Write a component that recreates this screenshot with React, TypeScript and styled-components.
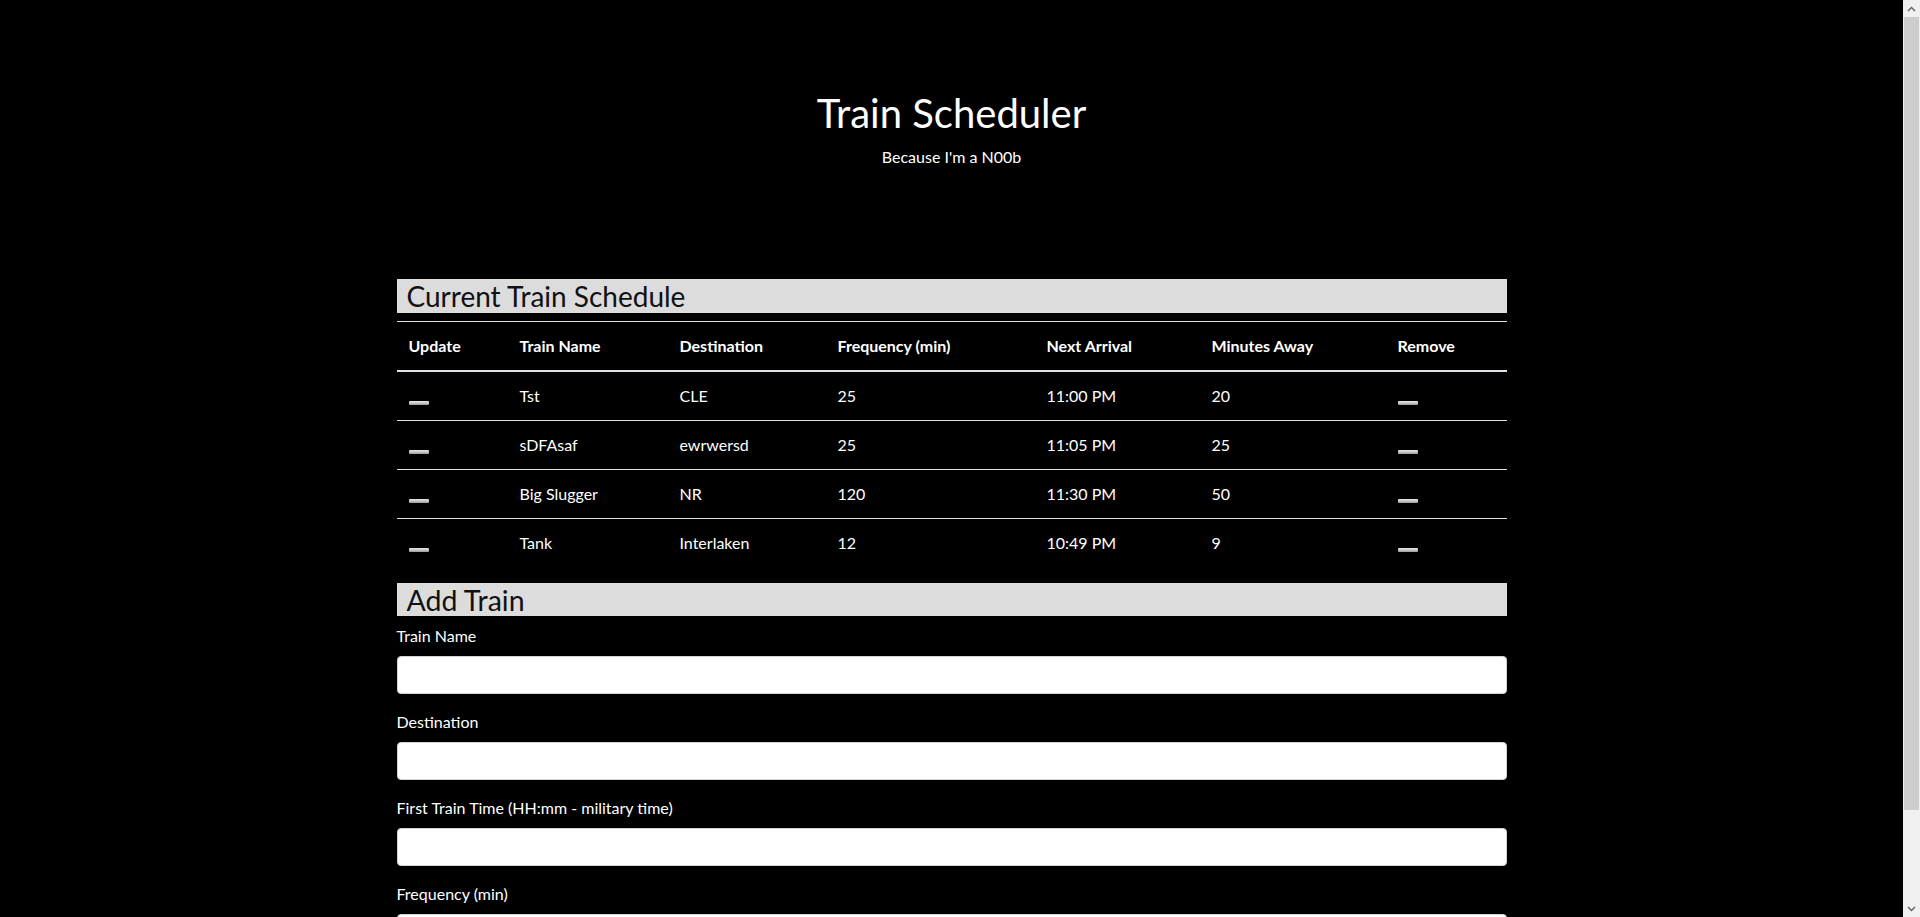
import React from "react";
import styled, { createGlobalStyle } from "styled-components";

const GlobalStyle = createGlobalStyle`
  html, body {
    margin: 0;
    padding: 0;
    background: #000;
    overflow: hidden;
  }
  body {
    font-family: "Lato", "Open Sans", sans-serif;
    font-size: 16px;
    line-height: 1.5;
    color: #fff;
  }
  * { box-sizing: border-box; }
`;

const Window = styled.div`
  display: flex;
  height: 100vh;
  background: #000;
`;

const Main = styled.main`
  flex: 1;
  min-width: 0;
  height: 100%;
  overflow: hidden;
`;

const ScrollRail = styled.div`
  width: 17px;
  flex: 0 0 17px;
  display: flex;
  flex-direction: column;
  background: #f0f0f0;
`;

const RailArrow = styled.div`
  height: 17px;
  flex: 0 0 17px;
  display: flex;
  align-items: center;
  justify-content: center;
  color: #606060;
`;

const RailThumb = styled.div`
  flex: 0 0 793px;
  margin: 0 1px 0 1px;
  background: #cdcdcd;
`;

const RailTrack = styled.div`
  flex: 1;
`;

const Container = styled.div`
  max-width: 1140px;
  margin: 0 auto;
  padding: 0 15px 16px;
`;

const Hero = styled.header`
  text-align: center;
  padding: 89px 0 62px;
  margin-bottom: 32px;
`;

const Title = styled.h1`
  margin: 0 0 8px;
  font-size: 40px;
  line-height: 48px;
  font-weight: 400;
`;

const Subtitle = styled.p`
  margin: 0 0 16px;
  font-size: 16px;
  line-height: 24px;
`;

const SectionBar = styled.h3<{ $size?: number }>`
  margin: 0 0 8px;
  padding-left: 10px;
  background: #dcdcdc;
  color: #111;
  font-size: ${(p) => p.$size ?? 28}px;
  line-height: 34px;
  font-weight: 400;
  height: ${(p) => (p.$size ? 33 : 34)}px;
`;

const Table = styled.table`
  width: 100%;
  border-collapse: collapse;
  table-layout: fixed;
  margin-bottom: 16px;
  color: #fff;
`;

const Col = styled.col<{ $w: number }>`
  width: ${(p) => p.$w}px;
`;

const Th = styled.th`
  text-align: left;
  font-weight: 700;
  padding: 12px;
  line-height: 24px;
  border-top: 1px solid #dee2e6;
  border-bottom: 2px solid #dee2e6;
`;

const Td = styled.td`
  padding: 12px;
  line-height: 24px;
  border-top: 1px solid #dee2e6;
`;

const BodyRow = styled.tr`
  &:first-child td {
    border-top: none;
  }
`;

const MiniButton = styled.button`
  display: inline-block;
  width: 20px;
  height: 4px;
  padding: 0;
  margin: 0;
  border: none;
  border-radius: 1px;
  background: linear-gradient(#e6e6e6, #c8c8c8 50%, #9a9a9a);
  vertical-align: -3px;
  cursor: pointer;
`;

const FormGroup = styled.div`
  margin-bottom: 16px;
`;

const Label = styled.label`
  display: inline-block;
  margin-bottom: 8px;
  line-height: 24px;
  color: #fff;
`;

const Input = styled.input`
  display: block;
  width: 100%;
  height: 38px;
  padding: 6px 12px;
  font-size: 16px;
  font-family: inherit;
  border: 1px solid #ced4da;
  border-radius: 4px;
  background: #fff;
  color: #495057;
`;

const SubmitButton = styled.button`
  height: 38px;
  padding: 6px 12px;
  font-size: 16px;
  font-family: inherit;
  border: 1px solid #6c757d;
  border-radius: 4px;
  background: #6c757d;
  color: #fff;
`;

const trains = [
  { name: "Tst", dest: "CLE", freq: "25", next: "11:00 PM", away: "20" },
  { name: "sDFAsaf", dest: "ewrwersd", freq: "25", next: "11:05 PM", away: "25" },
  { name: "Big Slugger", dest: "NR", freq: "120", next: "11:30 PM", away: "50" },
  { name: "Tank", dest: "Interlaken", freq: "12", next: "10:49 PM", away: "9" },
];

const widths = [111, 160, 158, 209, 165, 186, 121];
const headers = ["Update", "Train Name", "Destination", "Frequency (min)", "Next Arrival", "Minutes Away", "Remove"];

const fields = [
  { id: "name", label: "Train Name" },
  { id: "dest", label: "Destination" },
  { id: "first", label: "First Train Time (HH:mm - military time)" },
  { id: "freq", label: "Frequency (min)" },
];

const Chevron = ({ up }: { up?: boolean }) => (
  <svg width="9" height="6" viewBox="0 0 9 6" aria-hidden="true">
    <path
      d={up ? "M1 5 L4.5 1.5 L8 5" : "M1 1 L4.5 4.5 L8 1"}
      fill="none"
      stroke="currentColor"
      strokeWidth="1.4"
    />
  </svg>
);

export default function App() {
  return (
    <Window>
      <GlobalStyle />
      <Main>
        <Container>
          <Hero>
            <Title>Train Scheduler</Title>
            <Subtitle>Because I'm a N00b</Subtitle>
          </Hero>

          <SectionBar>Current Train Schedule</SectionBar>
          <Table>
            <colgroup>
              {widths.map((w, i) => (
                <Col key={i} $w={w} />
              ))}
            </colgroup>
            <thead>
              <tr>
                {headers.map((h) => (
                  <Th key={h}>{h}</Th>
                ))}
              </tr>
            </thead>
            <tbody>
              {trains.map((t) => (
                <BodyRow key={t.name}>
                  <Td>
                    <MiniButton aria-label="Update" />
                  </Td>
                  <Td>{t.name}</Td>
                  <Td>{t.dest}</Td>
                  <Td>{t.freq}</Td>
                  <Td>{t.next}</Td>
                  <Td>{t.away}</Td>
                  <Td>
                    <MiniButton aria-label="Remove" />
                  </Td>
                </BodyRow>
              ))}
            </tbody>
          </Table>

          <SectionBar $size={28.5}>Add Train</SectionBar>
          <form onSubmit={(e) => e.preventDefault()}>
            {fields.map((f) => (
              <FormGroup key={f.id}>
                <Label htmlFor={f.id}>{f.label}</Label>
                <Input id={f.id} type="text" />
              </FormGroup>
            ))}
            <SubmitButton type="submit">Submit</SubmitButton>
          </form>
        </Container>
      </Main>
      <ScrollRail aria-hidden="true">
        <RailArrow>
          <Chevron up />
        </RailArrow>
        <RailThumb />
        <RailTrack />
        <RailArrow>
          <Chevron />
        </RailArrow>
      </ScrollRail>
    </Window>
  );
}
